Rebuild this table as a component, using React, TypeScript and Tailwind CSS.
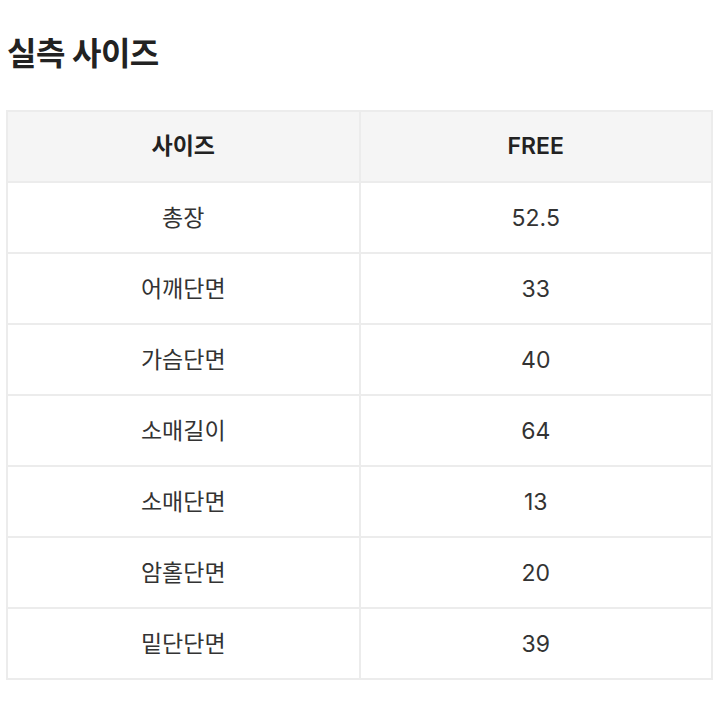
const rows = [
  ["총장", "52.5"],
  ["어깨단면", "33"],
  ["가슴단면", "40"],
  ["소매길이", "64"],
  ["소매단면", "13"],
  ["암홀단면", "20"],
  ["밑단단면", "39"],
];

export default function App() {
  return (
    <div
      className="w-[720px] h-[720px] bg-white pt-[30px] pl-[6px] pr-[7px] text-[#222]"
      style={{ fontFamily: 'Inter, "Noto Sans CJK KR", sans-serif' }}
    >
      <h1 className="text-[32px] font-bold leading-[48px] pl-[1px] tracking-[-0.5px]">실측 사이즈</h1>
      <table className="mt-[32px] w-[707px] border-collapse table-fixed text-[23px] text-[#333]">
        <thead>
          <tr className="h-[71px] bg-[#f5f5f5]">
            <th className="border-2 border-[#ececec] font-semibold text-[#222]">사이즈</th>
            <th className="border-2 border-[#ececec] font-semibold text-[#222]">FREE</th>
          </tr>
        </thead>
        <tbody>
          {rows.map(([label, value]) => (
            <tr key={label} className="h-[71px]">
              <td className="border-2 border-[#ececec] text-center pt-[1px]">{label}</td>
              <td className="border-2 border-[#ececec] text-center pt-[1px]">{value}</td>
            </tr>
          ))}
        </tbody>
      </table>
    </div>
  );
}
